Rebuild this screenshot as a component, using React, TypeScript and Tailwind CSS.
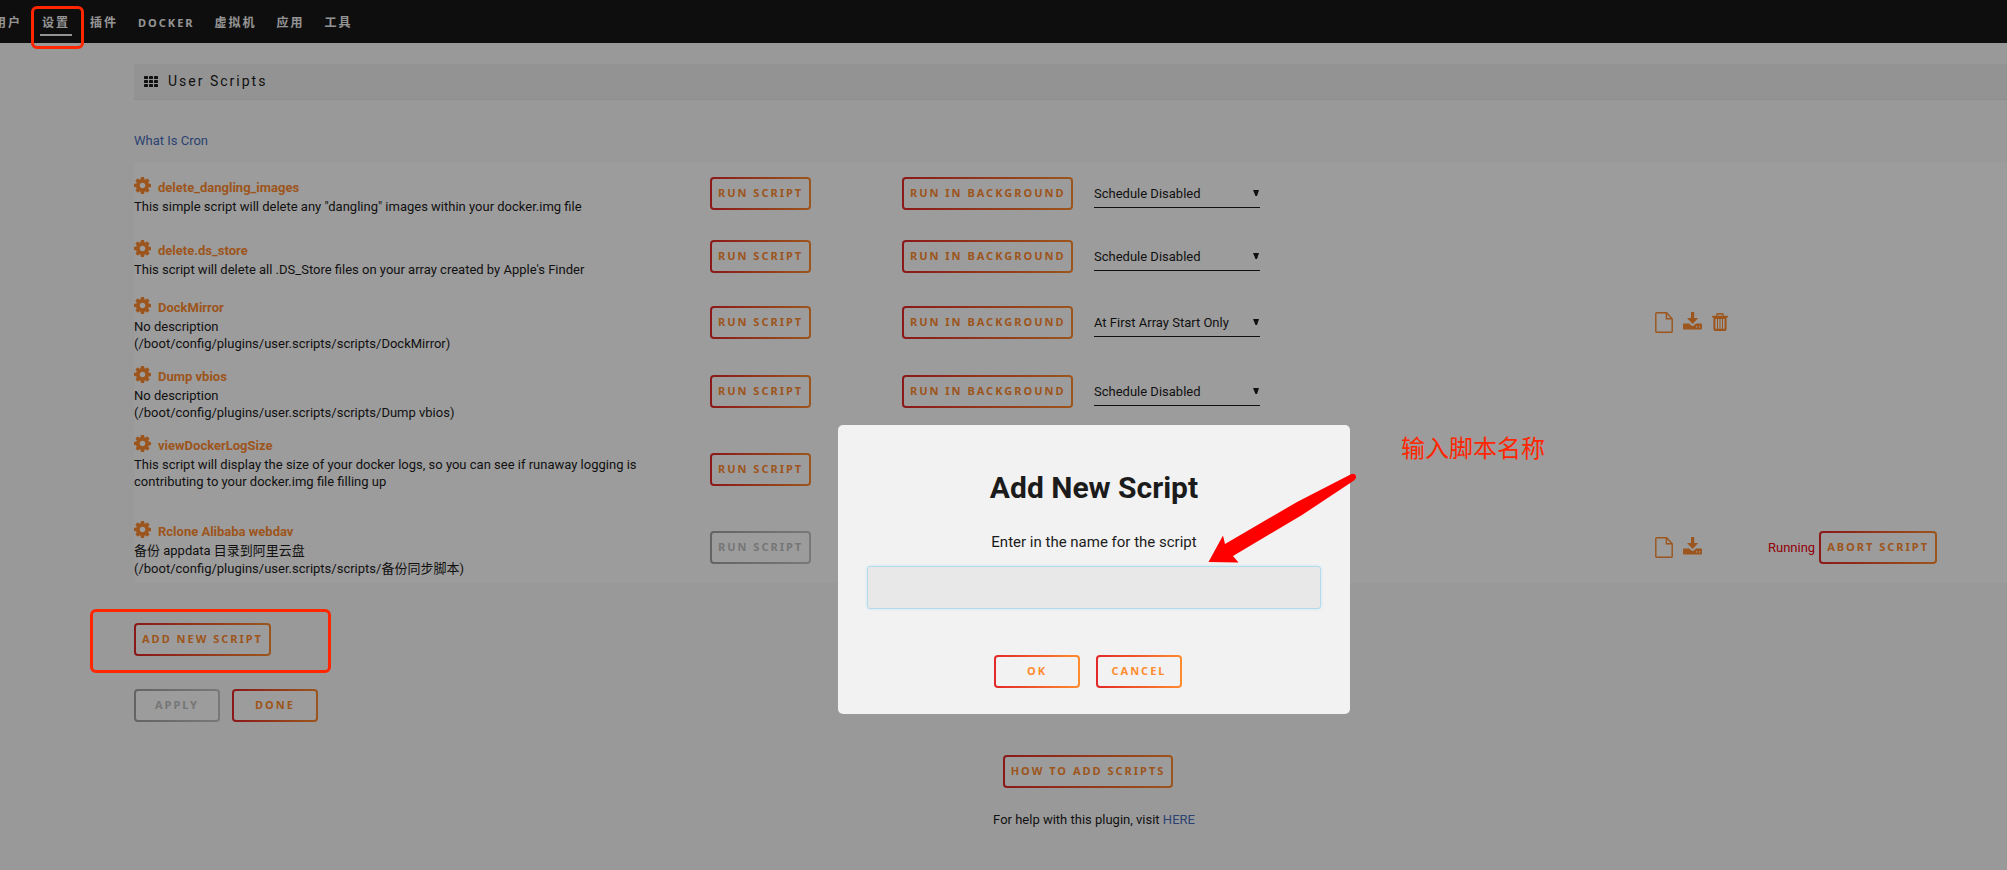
import React from "react";

type Script = {
  name: string;
  lines: string[];
  height: string;
  leading: string;
  schedule?: string;
  files?: boolean;
  deletable?: boolean;
  running?: boolean;
  padded?: boolean;
};

const scripts: Script[] = [
  {
    name: "delete_dangling_images",
    lines: ['This simple script will delete any "dangling" images within your docker.img file'],
    height: "h-[63px]",
    leading: "leading-[17px]",
    schedule: "Schedule Disabled",
  },
  {
    name: "delete.ds_store",
    lines: ["This script will delete all .DS_Store files on your array created by Apple's Finder"],
    height: "h-[63px]",
    leading: "leading-[17px]",
    schedule: "Schedule Disabled",
  },
  {
    name: "DockMirror",
    lines: ["No description", "(/boot/config/plugins/user.scripts/scripts/DockMirror)"],
    height: "h-[69px]",
    leading: "leading-[17px]",
    schedule: "At First Array Start Only",
    files: true,
    deletable: true,
  },
  {
    name: "Dump vbios",
    lines: ["No description", "(/boot/config/plugins/user.scripts/scripts/Dump vbios)"],
    height: "h-[69px]",
    leading: "leading-[17px]",
    schedule: "Schedule Disabled",
  },
  {
    name: "viewDockerLogSize",
    lines: [
      "This script will display the size of your docker logs, so you can see if runaway logging is",
      "contributing to your docker.img file filling up",
    ],
    height: "h-[86px]",
    leading: "leading-[17px]",
    padded: true,
  },
  {
    name: "Rclone Alibaba webdav",
    lines: ["备份 appdata 目录到阿里云盘", "(/boot/config/plugins/user.scripts/scripts/备份同步脚本)"],
    height: "h-[71px]",
    leading: "leading-[18px]",
    files: true,
    running: true,
  },
];

const navItems = ["用户", "设置", "插件", "DOCKER", "虚拟机", "应用", "工具"];

const buttonBase =
  "h-[33px] min-w-[86px] whitespace-nowrap rounded border-2 border-transparent px-1.5 text-center font-['Noto_Sans',sans-serif] text-[11px] font-bold tracking-[2px]";

const buttonTone = {
  page: "text-[#ff8c2f] [background:linear-gradient(#ffffff,#ffffff)_padding-box,linear-gradient(90deg,#e22828,#ff8c2f)_border-box]",
  dialog:
    "text-[#ff8c2f] [background:linear-gradient(#f2f2f2,#f2f2f2)_padding-box,linear-gradient(90deg,#e22828,#ff8c2f)_border-box]",
  disabled:
    "text-[#c2c2c2] [background:linear-gradient(#ffffff,#ffffff)_padding-box,linear-gradient(90deg,#a3a3a3,#c5c5c5)_border-box]",
};

function Button({ tone = "page", children }: { tone?: keyof typeof buttonTone; children: React.ReactNode }) {
  return (
    <button type="button" disabled={tone === "disabled"} className={`${buttonBase} ${buttonTone[tone]}`}>
      {children}
    </button>
  );
}

function GearIcon() {
  return (
    <svg viewBox="128 128 1536 1536" className="mb-1 size-[17px] shrink-0" fill="currentColor" aria-hidden="true">
      <path d="M1152 896q0-106-75-181t-181-75-181 75-75 181 75 181 181 75 181-75 75-181zm512-109v222q0 12-8 23t-20 13l-185 28q-19 54-39 91 35 50 107 138 10 12 10 25t-9 23q-27 37-99 108t-94 71q-12 0-26-9l-138-108q-44 23-91 38-16 136-29 186-7 28-36 28h-222q-14 0-24.5-8.5t-11.5-21.5l-28-184q-49-16-90-37l-141 107q-10 9-25 9-14 0-25-11-126-114-165-168-7-10-7-23 0-12 8-23 15-21 51-66.5t54-70.5q-27-50-41-99l-183-27q-13-2-21-12.5t-8-23.5v-222q0-12 8-23t19-13l186-28q14-46 39-92-40-57-107-138-10-12-10-24 0-10 9-23 26-36 98.5-107.5t94.5-71.5q13 0 26 10l138 107q44-23 91-38 16-136 29-186 7-28 36-28h222q14 0 24.5 8.5t11.5 21.5l28 184q49 16 90 37l142-107q9-9 24-9 13 0 25 10 129 119 165 170 7 8 7 22 0 12-8 23-15 21-51 66.5t-54 70.5q26 50 41 98l183 28q13 2 21 12.5t8 23.5z" />
    </svg>
  );
}

function GridIcon() {
  return (
    <svg viewBox="0 0 14 11" className="h-[11px] w-[14px]" fill="currentColor" aria-hidden="true">
      {[0, 4, 8].map((y) =>
        [0, 5, 10].map((x) => <rect key={`${x}-${y}`} x={x} y={y} width="4" height="3" rx="0.4" />)
      )}
    </svg>
  );
}

function FileIcon() {
  return (
    <svg viewBox="0 0 18 21" className="h-[21px] w-[18px]" fill="none" stroke="currentColor" strokeWidth="1.4" aria-hidden="true">
      <path d="M1.7 .8H11.6L17.2 6.8V19.6Q17.2 20.2 16.6 20.2H1.5Q.8 20.2 .8 19.5V1.6Q.8 .8 1.7 .8Z" />
      <path d="M11.4 1V6.8H17" />
    </svg>
  );
}

function DownloadIcon() {
  return (
    <svg viewBox="0 0 19 18" className="h-[18px] w-[19px]" fill="currentColor" aria-hidden="true">
      <path d="M8 0h3.2v6h4L9.6 12 4 6h4Z" />
      <path
        fillRule="evenodd"
        d="M1 11.5H6.2L8 13.3Q9.6 14.6 11.2 13.3L13 11.5H18Q19 11.5 19 12.5V16.5Q19 17.5 18 17.5H1Q0 17.5 0 16.5V12.5Q0 11.5 1 11.5ZM13 14.2V15.4H14.2V14.2ZM16 14.2V15.4H17.2V14.2Z"
      />
    </svg>
  );
}

function TrashIcon() {
  return (
    <svg viewBox="0 0 16 19" className="h-[19px] w-4" fill="currentColor" aria-hidden="true">
      <path d="M4.2 4.2V2.6Q4.2 1 5.8 1H10.2Q11.8 1 11.8 2.6V4.2H10.4V2.9Q10.4 2.4 9.9 2.4H6.1Q5.6 2.4 5.6 2.9V4.2Z" />
      <rect x="0" y="3.8" width="16" height="1.8" rx=".6" />
      <path
        fillRule="evenodd"
        d="M1.4 5H14.6V17Q14.6 19 12.8 19H3.2Q1.4 19 1.4 17ZM3.4 7V16.8H5V7ZM6 7V16.8H7.5V7ZM8.5 7V16.8H10V7ZM11 7V16.8H12.6V7Z"
      />
    </svg>
  );
}

function ScriptRow({ script }: { script: Script }) {
  return (
    <tr className={script.height}>
      <td className={script.padded ? "pt-1 pb-[22px]" : "pt-1 pb-[5px]"}>
        <div className="flex h-[26px] items-end gap-[7px] text-[#ff8c2f]">
          <GearIcon />
          <b className="leading-5">{script.name}</b>
        </div>
        {script.lines.map((line) => (
          <div key={line} className={`whitespace-nowrap ${script.leading}`}>
            {line}
          </div>
        ))}
      </td>
      <td>
        <Button tone={script.running ? "disabled" : "page"}>RUN SCRIPT</Button>
      </td>
      <td>{script.schedule && <Button>RUN IN BACKGROUND</Button>}</td>
      <td>
        {script.schedule && (
          <div className="relative w-[166px]">
            <select
              aria-label={`Schedule for ${script.name}`}
              className="h-[29px] w-full appearance-none border-b border-[#1c1b1b] bg-transparent pt-0.5"
            >
              <option>{script.schedule}</option>
            </select>
            <svg viewBox="0 0 6 6" className="absolute top-[11px] right-px size-1.5" aria-hidden="true">
              <path d="M0 0H6L4 6H2.5Z" fill="#1c1b1b" />
            </svg>
          </div>
        )}
      </td>
      <td>
        {script.files && (
          <div className="flex items-start gap-2.5 pl-1 text-[#ff8c2f]">
            <button type="button" aria-label="View log">
              <FileIcon />
            </button>
            <button type="button" aria-label="Download log">
              <DownloadIcon />
            </button>
            {script.deletable && (
              <button type="button" aria-label="Delete log">
                <TrashIcon />
              </button>
            )}
          </div>
        )}
      </td>
      <td>
        {script.running && (
          <div className="flex items-center gap-1 pl-0.5">
            <span className="text-[#f0000c]">Running</span>
            <Button>ABORT SCRIPT</Button>
          </div>
        )}
      </td>
    </tr>
  );
}

function Annotations() {
  return (
    <>
      <div className="absolute top-[6px] left-[31px] h-[43px] w-[53px] rounded-md border-[3px] border-[#ff2600]" />
      <div className="absolute top-[609px] left-[90px] h-16 w-[241px] rounded-md border-[3px] border-[#ff2600]" />
      <p className="absolute top-[431px] left-[1401px] text-2xl leading-9 text-[#ff2600]">输入脚本名称</p>
      <svg viewBox="0 0 150 92" className="absolute top-[472px] left-[1207px] h-[92px] w-[150px]" aria-hidden="true">
        <path
          d="M1.5 90L16 63.5L18 72L90 30L144 2.2Q148 1 149 4Q149.5 6.5 147 8.5L95 43L26 84L31.5 90.5Z"
          fill="#ff0000"
        />
      </svg>
    </>
  );
}

export default function App() {
  return (
    <div className="relative min-h-screen overflow-hidden bg-[#fbfbfb] font-[Roboto,'Noto_Sans_CJK_SC',sans-serif] text-[13px] text-[#1c1b1b]">
      <div className="relative min-h-screen w-[calc(100%+181px)]">
        <nav className="-ml-2 flex h-[43px] items-center gap-4 bg-[#171717] text-[12px] font-bold tracking-[2px] text-[#f2f2f2]">
          {navItems.map((item) => (
            <a
              key={item}
              href="#"
              className={`border-b-2 px-0.5 pt-1 leading-[22px] ${item === "设置" ? "border-[#f2f2f2]" : "border-transparent"} ${item === "DOCKER" ? "font-['Noto_Sans',sans-serif] text-[11px]" : ""}`}
            >
              {item}
            </a>
          ))}
        </nav>

        <main className="px-[134px] pt-[21px]">
          <h1 className="flex h-9 items-center gap-2.5 border-b border-[#e6e6e6] bg-[#f0f0f0] px-2.5 pb-px text-sm tracking-[2px]">
            <GridIcon />
            User Scripts
          </h1>

          <a href="#" className="mt-8 mb-3 block leading-[18px] text-[#486dba]">
            What Is Cron
          </a>

          <table className="w-full table-fixed bg-white">
            <colgroup>
              <col className="w-[30%]" />
              <col className="w-[10%]" />
              <col className="w-[10%]" />
              <col className="w-[29%]" />
              <col className="w-[6%]" />
              <col className="w-[15%]" />
            </colgroup>
            <tbody>
              {scripts.map((script) => (
                <ScriptRow key={script.name} script={script} />
              ))}
            </tbody>
          </table>

          <div className="mt-10 flex">
            <Button>ADD NEW SCRIPT</Button>
          </div>
          <div className="mt-[33px] flex gap-3">
            <Button tone="disabled">APPLY</Button>
            <Button>DONE</Button>
          </div>
          <div className="mt-[33px] flex justify-center pr-3">
            <Button>HOW TO ADD SCRIPTS</Button>
          </div>
          <p className="mt-[23px] text-center leading-[18px]">
            For help with this plugin, visit{" "}
            <a href="#" className="text-[#486dba]">
              HERE
            </a>
          </p>
        </main>

        <div className="absolute inset-0 flex items-start justify-center bg-black/39 pt-[425px]">
          <form
            role="dialog"
            aria-labelledby="dialog-title"
            className="w-[512px] rounded-[5px] bg-[#f2f2f2] px-[29px] pt-[43px] pb-[26px] text-center"
          >
            <h2 id="dialog-title" className="text-[30px] leading-10 font-bold">
              Add New Script
            </h2>
            <label htmlFor="script-name" className="mt-[22px] block text-[15px] leading-6">
              Enter in the name for the script
            </label>
            <input
              id="script-name"
              type="text"
              className="mt-3 block h-[43px] w-full rounded-[3px] border border-[#b4dbed] bg-[#e8e8e8] px-3 shadow-[0_0_3px_#c4e6f5] outline-none"
            />
            <div className="mt-[46px] flex justify-center gap-4 pr-3">
              <Button tone="dialog">OK</Button>
              <Button tone="dialog">CANCEL</Button>
            </div>
          </form>
        </div>
      </div>
      <Annotations />
    </div>
  );
}
